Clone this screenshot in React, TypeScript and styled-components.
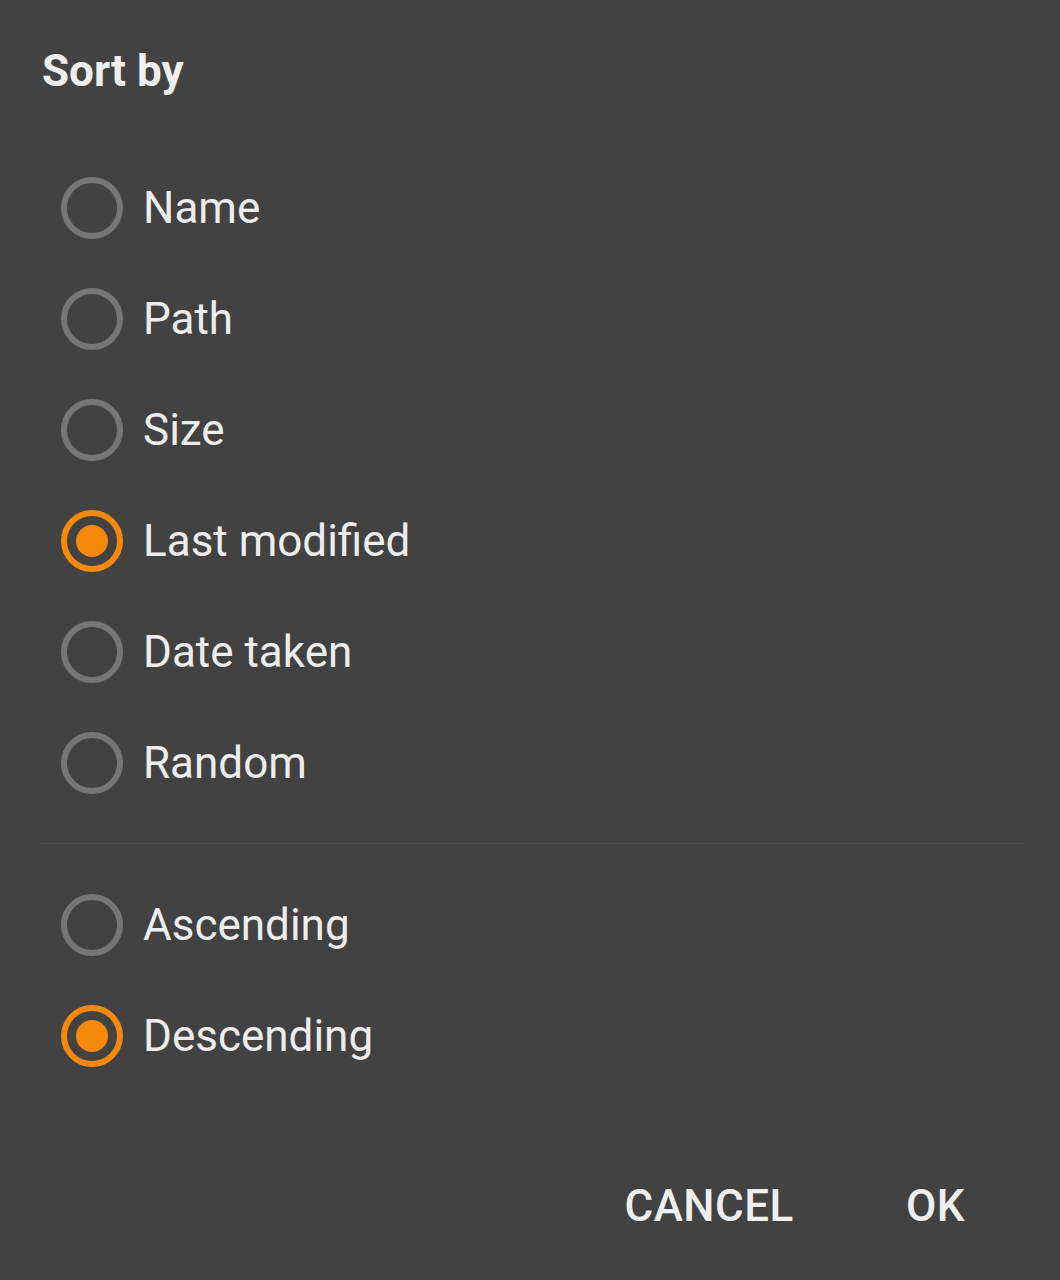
import { useState } from 'react';
import styled, { createGlobalStyle } from 'styled-components';

const GlobalStyle = createGlobalStyle`
	html, body {
		margin: 0;
		padding: 0;
		background-color: #424242;
	}

	body {
		font-family: Roboto, 'Noto Sans', sans-serif;
		-webkit-font-smoothing: antialiased;
	}
`;

const Dialog = styled.div`
	width: 1060px;
	height: 1280px;

	display: flex;
	flex-direction: column;

	background-color: #424242;
	color: #ececec;
	box-sizing: border-box;
`;

const Title = styled.h2`
	margin: 0;
	padding: 46px 0 0 42px;

	font-size: 44px;
	font-weight: 700;
	line-height: 50px;
	color: #efefef;
`;

const Group = styled.div`
	display: flex;
	flex-direction: column;
`;

const Options = styled(Group)`
	margin-top: 56px;
`;

const Row = styled.label`
	height: 111px;

	display: flex;
	align-items: center;
	gap: 20px;

	padding-left: 61px;

	cursor: pointer;
`;

const Radio = styled.span<{ $checked: boolean }>`
	width: 62px;
	height: 62px;

	display: flex;
	justify-content: center;
	align-items: center;
	flex-shrink: 0;

	box-sizing: border-box;
	border: 6px solid ${(props) => (props.$checked ? '#f6890a' : '#767676')};
	border-radius: 50%;

	&::after {
		content: '';
		width: 32px;
		height: 32px;

		display: ${(props) => (props.$checked ? 'block' : 'none')};

		border-radius: 50%;
		background-color: #f6890a;
	}
`;

const Label = styled.span`
	font-size: 44px;
	line-height: 52px;
	color: #ededed;
`;

const Divider = styled.hr`
	margin: 25px 35px 25px 42px;

	border: none;
	border-top: 1px solid #4c4c4c;
`;

const Actions = styled.div`
	display: flex;
	justify-content: flex-end;
	gap: 64px;

	margin-top: auto;
	padding: 0 71px 30px 0;
`;

const Button = styled.button`
	height: 88px;

	padding: 0 24px;

	background: transparent;
	border: none;

	font-family: Roboto, 'Noto Sans', sans-serif;
	font-size: 44px;
	font-weight: 500;
	letter-spacing: 0.5px;
	color: #efefef;

	cursor: pointer;
`;

const sortFields = ['Name', 'Path', 'Size', 'Last modified', 'Date taken', 'Random'];
const sortOrders = ['Ascending', 'Descending'];

const App = () => {
	const [field, setField] = useState('Last modified');
	const [order, setOrder] = useState('Descending');

	return (
		<>
			<GlobalStyle />
			<Dialog>
				<Title>Sort by</Title>

				<Options>
					{sortFields.map((item) => (
						<Row key={item} onClick={() => setField(item)}>
							<Radio $checked={field === item} />
							<Label>{item}</Label>
						</Row>
					))}
				</Options>

				<Divider />

				<Group>
					{sortOrders.map((item) => (
						<Row key={item} onClick={() => setOrder(item)}>
							<Radio $checked={order === item} />
							<Label>{item}</Label>
						</Row>
					))}
				</Group>

				<Actions>
					<Button>CANCEL</Button>
					<Button>OK</Button>
				</Actions>
			</Dialog>
		</>
	);
};

export default App;
